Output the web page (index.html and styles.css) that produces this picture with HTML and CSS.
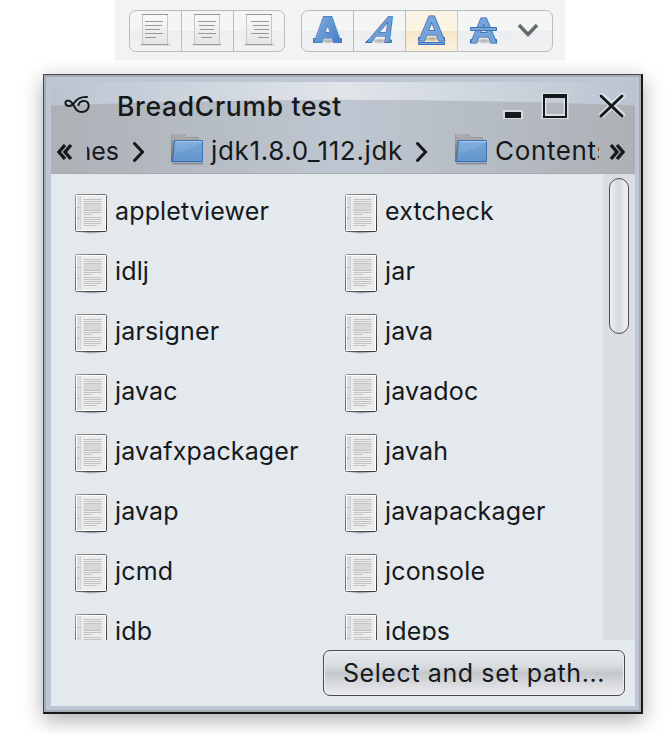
FILE: index.html
```html
<!DOCTYPE html>
<html lang="en">
<head>
<meta charset="utf-8">
<title>BreadCrumb test</title>
<link rel="stylesheet" href="styles.css">
</head>
<body>
<svg class="defs" width="0" height="0" aria-hidden="true">
  <defs>
    <linearGradient id="paper" x1="0" y1="0" x2="0" y2="1"><stop offset="0" stop-color="#fafafa"/><stop offset="1" stop-color="#e4e4e2"/></linearGradient>
    <linearGradient id="ink" x1="0" y1="0" x2="1" y2="1"><stop offset="0" stop-color="#8bb5e2"/><stop offset="1" stop-color="#3972c2"/></linearGradient>
    <linearGradient id="blue" x1="0" y1="0" x2="0" y2="1"><stop offset="0" stop-color="#85b0dc"/><stop offset="1" stop-color="#689bd1"/></linearGradient>
    <linearGradient id="metal" x1="0" y1="0" x2="0" y2="1"><stop offset="0" stop-color="#a2a2a2"/><stop offset="1" stop-color="#6c6c6c"/></linearGradient>
    <linearGradient id="frame" x1="0" y1="0" x2="1" y2="1"><stop offset="0" stop-color="#999"/><stop offset=".5" stop-color="#666"/><stop offset="1" stop-color="#333"/></linearGradient>
    <radialGradient id="shade"><stop offset="0" stop-color="#000" stop-opacity=".6"/><stop offset="1" stop-color="#000" stop-opacity="0"/></radialGradient>
    <symbol id="doc" viewBox="0 0 32 40">
      <ellipse cx="16" cy="37" rx="14" ry="3" fill="url(#shade)"/>
      <rect x=".5" y=".5" width="31" height="37" rx="1" fill="#fff" stroke="url(#frame)"/>
      <path d="M2 2h28v34H2z" fill="#ececec"/>
      <path d="M2 2h3v34H2z" fill="#ddd"/>
      <path d="M5.500 2v34" stroke="#d2d2d2"/>
      <path d="M2 13.500h2M2 24.500h2" stroke="#aaa"/>
      <path d="M8.500 10h18v6h-18z" fill="#d7d7d7"/>
      <path d="M8.500 5.500h18M8.500 7.500h18M8.500 9.500h18M8.500 16.500h18M8.500 18.500h18M8.500 20.500h9M8.500 23.500h18M8.500 25.500h18M8.500 27.500h18M8.500 29.500h18M8.500 31.500h13" stroke="#c3c3c3"/>
    </symbol>
    <symbol id="folder" viewBox="0 0 34 32">
      <path d="M1 30.500h31" stroke="#68737e" stroke-opacity=".6" stroke-width="2"/>
      <path d="M0 29V1h14l2 3h12v25z" fill="url(#metal)"/>
      <path d="M1 2h12M1 4h14M1 6h26" stroke="#b6b6b6"/>
      <path d="M3.500 7.500h28V28.500H1.500z" fill="url(#blue)" stroke="#3871b5"/>
      <path d="M4.500 8.500h27" stroke="#a6c7e9"/>
      <path d="M3 21Q15 18 31 10v18H2z" fill="#5689c7" opacity=".28"/>
    </symbol>
    <symbol id="page" viewBox="0 0 30 34">
      <path d="M0 31.500h30" stroke="#bbb" stroke-width="2" stroke-opacity=".7"/>
      <path d="M2.500 1.500h25v30h-25z" fill="url(#paper)" stroke="#c8c8c6"/>
      <path d="M2 1.500h26M2 31.500h26" stroke="#979797"/>
    </symbol>
    <symbol id="next" viewBox="0 0 14 20"><path d="M2.500 1.500l8 8.500-8 8.500" fill="none" stroke="#15191c" stroke-width="3" stroke-linecap="round"/></symbol>
  </defs>
</svg>

<div class="toolbar">
  <div class="group align">
    <span class="tool"><svg width="30" height="34"><use href="#page"/><path d="M5 8.500h18M5 12.500h17M5 16.500h15M5 20.500h18M5 24.500h11" stroke="#999"/></svg></span>
    <span class="tool"><svg width="30" height="34"><use href="#page"/><path d="M6 8.500h18M7 12.500h16M8 16.500h14M6 20.500h18M9 24.500h11" stroke="#999"/></svg></span>
    <span class="tool"><svg width="30" height="34"><use href="#page"/><path d="M7 8.500h18M9 12.500h16M10 16.500h15M7 20.500h18M14 24.500h11" stroke="#999"/></svg></span>
  </div>
  <div class="group style">
    <span class="tool"><svg class="letter bold" width="34" height="36" viewBox="0 0 34 36"><ellipse cx="17" cy="28" rx="11" ry="3" fill="url(#shade)" opacity=".5"/><g transform="translate(16.500 29)"><path class="feet" d="M-14-3.500H-7V.500H-14zM7-3.500H14V.500H7z"/><text class="edge">A</text><text class="glow">A</text><text class="core">A</text></g></svg></span>
    <span class="tool"><svg class="letter italic" width="34" height="36" viewBox="0 0 34 36"><ellipse cx="17" cy="28" rx="11" ry="3" fill="url(#shade)" opacity=".5"/><path class="feet" d="M2.500 29.500l3-3h3v3zM23.500 27h5v2.500h-5z"/><g transform="translate(15 29) skewX(-26) scale(1 1.060)"><text class="edge">A</text><text class="glow">A</text></g></svg></span>
    <span class="tool active"><svg class="letter" width="34" height="36" viewBox="0 0 34 36"><ellipse cx="17" cy="26" rx="11" ry="3" fill="url(#shade)" opacity=".5"/><path class="feet" d="M3.500 24.500h5v3h-5zM24.500 24.500h5v3h-5z"/><g transform="translate(16.500 26.500) scale(1.080 1)"><text class="edge">A</text><text class="glow">A</text></g><path class="feet" d="M3.500 29.500h26v2h-26z"/></svg></span>
    <span class="tool"><svg class="letter" width="34" height="36" viewBox="0 0 34 36"><ellipse cx="17" cy="28" rx="11" ry="3" fill="url(#shade)" opacity=".5"/><path class="feet" d="M3.500 26.500h5v3h-5zM24.500 26.500h5v3h-5z"/><g transform="translate(16.500 28.500) scale(1.080 1)"><text class="edge">A</text><text class="glow">A</text></g><path class="feet" d="M3.500 14.500h26v3h-26z"/></svg></span>
    <svg class="drop" width="22" height="16" viewBox="0 0 22 16"><path d="M2 2l9 9.500L20 2" fill="none" stroke="#666a70" stroke-width="3.400"/></svg>
  </div>
</div>

<div class="window">
  <div class="header">
    <svg class="sheen" width="584" height="91" viewBox="0 0 584 91">
      <defs>
        <linearGradient id="low"><stop offset="0" stop-color="#adb1b6"/><stop offset=".5" stop-color="#bec6d1"/><stop offset="1" stop-color="#adb1b6"/></linearGradient>
        <linearGradient id="high"><stop offset="0" stop-color="#bac4d1"/><stop offset=".5" stop-color="#e1e5ea"/><stop offset="1" stop-color="#bac4d1"/></linearGradient>
      </defs>
      <rect width="584" height="91" fill="url(#low)"/>
      <path d="M0 0h584v23.500Q292 12 0 23.500z" fill="url(#high)"/>
    </svg>
    <div class="titlebar">
      <svg class="logo" width="28" height="20" viewBox="0 0 28 20"><path d="M24 2C17 1.500 14 4 11 8C9 12 3 11.500 2.500 8.500C2 5.500 6 4 9 8C12 11 12 17 19 17C27 17 28 6 21 6C18 6 16 8 15.500 10" fill="none" stroke="#15191c" stroke-width="2" stroke-linecap="round"/></svg>
      <span class="title">BreadCrumb test</span>
      <svg class="controls" width="128" height="32" viewBox="0 0 128 32">
        <g fill="none" stroke="#e4e8ed" stroke-opacity=".8">
          <path d="M4 20h20v9H4z" fill="#e4e8ed" fill-opacity=".7" stroke="none"/>
          <path d="M45 5.500h22v21H45z" stroke-width="5"/>
          <path d="M103 6l20 19M123 6l-20 19" stroke-width="6" stroke-linecap="round"/>
        </g>
        <path d="M6 22h16v6H6z" fill="#15191c"/>
        <path d="M44 4h24v24H44zM46 8v18h20V8z" fill="#15191c" fill-rule="evenodd"/>
        <path d="M102 6l21 20M123 6l-21 20" stroke="#15191c" stroke-width="3" stroke-linecap="round"/>
      </svg>
    </div>
    <div class="crumbs">
      <svg class="more" width="18" height="18" viewBox="0 0 18 18"><path d="M9 2L3 9l6 7M15 2L9 9l6 7" fill="none" stroke="#15191c" stroke-width="3.400"/></svg>
      <div class="trail">
        <span class="cut"><span class="crumb">nes</span></span>
        <svg class="next" width="14" height="20"><use href="#next"/></svg>
        <svg class="folder" width="34" height="32"><use href="#folder"/></svg>
        <span class="crumb jdk">jdk1.8.0_112.jdk</span>
        <svg class="next" width="14" height="20"><use href="#next"/></svg>
        <svg class="folder second" width="34" height="32"><use href="#folder"/></svg>
        <span class="crumb">Contents</span>
      </div>
      <svg class="more right" width="18" height="18" viewBox="0 0 18 18"><path d="M3 2l6 7-6 7M9 2l6 7-6 7" fill="none" stroke="#15191c" stroke-width="3.400"/></svg>
    </div>
  </div>
  <div class="browser">
    <div class="files">
      <div class="file"><svg><use href="#doc"/></svg><span>appletviewer</span></div>
      <div class="file"><svg><use href="#doc"/></svg><span>extcheck</span></div>
      <div class="file"><svg><use href="#doc"/></svg><span>idlj</span></div>
      <div class="file"><svg><use href="#doc"/></svg><span>jar</span></div>
      <div class="file"><svg><use href="#doc"/></svg><span>jarsigner</span></div>
      <div class="file"><svg><use href="#doc"/></svg><span>java</span></div>
      <div class="file"><svg><use href="#doc"/></svg><span>javac</span></div>
      <div class="file"><svg><use href="#doc"/></svg><span>javadoc</span></div>
      <div class="file"><svg><use href="#doc"/></svg><span>javafxpackager</span></div>
      <div class="file"><svg><use href="#doc"/></svg><span>javah</span></div>
      <div class="file"><svg><use href="#doc"/></svg><span>javap</span></div>
      <div class="file"><svg><use href="#doc"/></svg><span>javapackager</span></div>
      <div class="file"><svg><use href="#doc"/></svg><span>jcmd</span></div>
      <div class="file"><svg><use href="#doc"/></svg><span>jconsole</span></div>
      <div class="file"><svg><use href="#doc"/></svg><span>jdb</span></div>
      <div class="file"><svg><use href="#doc"/></svg><span>jdeps</span></div>
    </div>
    <div class="track"><div class="thumb"></div></div>
  </div>
  <div class="footer"><button>Select and set path...</button></div>
</div>
</body>
</html>
```
FILE: styles.css
```css
* { box-sizing: border-box; }
body {
  margin: 0;
  width: 672px;
  height: 734px;
  overflow: hidden;
  background: #fff;
  color: #15191c;
  font: 25px/30px Inter, "Liberation Sans", sans-serif;
}
svg { display: block; flex: none; }
.defs { position: absolute; }

.toolbar {
  display: flex;
  gap: 16px;
  width: 450px;
  height: 60px;
  margin-left: 115px;
  padding: 10px 12px 8px 14px;
  background: #f2f4f4;
}
.group {
  display: flex;
  height: 42px;
  border: 1px solid #b9bcc0;
  border-radius: 7px;
  overflow: hidden;
  background: linear-gradient(#f4f6f6 0 50%, #ebedef 50%, #f0f2f4);
}
.align { width: 156px; }
.style { width: 252px; }
.tool {
  flex: none;
  width: 52px;
  padding: 2px 0 0 9px;
  border-right: 1px solid #b9bcc0;
}
.align .tool { padding-left: 10px; }
.align .tool:last-child, .tool:nth-child(4) { border-right: 0; }
.tool.active {
  border-color: #d5c9ad;
  background: linear-gradient(#faf4e5 0 50%, #f7e6c6 50%, #faf1df);
}
.letter text {
  font-family: "DejaVu Sans", sans-serif;
  font-size: 32px;
  text-anchor: middle;
}
.feet { fill: #79a8dc; stroke: #3d70b4; }
.edge { fill: #3d70b4; stroke: #3d70b4; stroke-width: 2.800px; }
.glow { fill: #6f9fda; stroke: #85b0e0; stroke-width: .9px; }
.core { fill: #5b90d0; }
.bold text { font-weight: bold; font-size: 33px; }
.bold .edge { stroke-width: 2px; }
.bold .glow { fill: #8fb8e6; stroke-width: .4px; }
.bold .core { fill: url(#ink); }
.italic .edge { stroke-width: 1.800px; }
.italic .glow { stroke-width: .2px; }
.drop { margin: 12px 0 0 7px; }

.window {
  width: 600px;
  height: 640px;
  margin: 14px 0 0 43px;
  padding: 7px 6px 6px 7px;
  border: 1px solid #454b50;
  border-width: 1px 2px 2px 1px;
  border-right-color: #15191c;
  border-bottom-color: #15191c;
  background: #bdc6d3;
  box-shadow: inset 0 0 0 2px #a6acb3, 0 6px 20px rgba(0, 0, 0, .33);
}
.header {
  position: relative;
  height: 92px;
  border-bottom: 1px solid #a6a9ad;
}
.sheen { position: absolute; left: 0; top: 0; }
.titlebar {
  position: relative;
  display: flex;
  height: 48px;
  padding-left: 12px;
}
.logo { margin-top: 13px; }
.title {
  width: 382px;
  margin: 9px 0 0 26px;
  font-size: 26.500px;
  font-weight: 450;
  letter-spacing: .68px;
  white-space: nowrap;
}
.controls { margin-top: 8px; }
.crumbs {
  position: relative;
  display: flex;
  height: 43px;
  padding-left: 5px;
}
.more { margin-top: 13px; }
.right { margin-left: 9px; }
.trail {
  display: flex;
  width: 518px;
  margin-left: 7px;
  overflow: hidden;
  white-space: nowrap;
}
.trail > * { flex: none; }
.crumb { margin-top: 6px; font-size: 26px; letter-spacing: .65px; }
.cut {
  display: flex;
  justify-content: flex-end;
  width: 32px;
  margin-left: 6px;
  overflow: hidden;
}
.cut .crumb { font-size: 25px; letter-spacing: 0; }
.trail .next { margin: 12px 0 0 14px; }
.cut + .next { margin-left: 13px; }
.trail .folder { margin: 3px 6px 0 25px; }
.trail .second { margin-left: 26px; }
.trail .jdk { width: 190px; }
.browser { display: flex; height: 466px; overflow: hidden; background: #e4e9ed; }
.files {
  display: grid;
  grid-template-columns: 270px 258px;
  grid-auto-rows: 60px;
  width: 552px;
  padding: 20px 0 0 24px;
}
.file { display: flex; }
.file svg { width: 32px; height: 40px; }
.file span { margin: 2px 0 0 8px; letter-spacing: .15px; }
.track { width: 32px; padding: 4px 6px; background: #dadde2; }
.thumb {
  width: 20px;
  height: 156px;
  border: 1px solid #4a4f54;
  border-radius: 10px;
  background: linear-gradient(90deg, #eef0f2, #dfe2e4 30%, #d3d8db 50%, #e3e5e9 70%, #f1f2f4);
}
.footer {
  display: flex;
  justify-content: flex-end;
  height: 66px;
  padding: 10px 10px 0 0;
  background: #e4e9ed;
}
button {
  width: 302px;
  height: 46px;
  padding: 0;
  border: 1px solid #474b50;
  border-radius: 7px;
  background: linear-gradient(#e7eaed, #d8dcdf 35%, #c4c8cc 50%, #d5d7da 70%, #eaebef);
  box-shadow: inset 0 0 0 1px #eef0f2;
  color: #15191c;
  font: inherit;
  letter-spacing: .6px;
}
```
